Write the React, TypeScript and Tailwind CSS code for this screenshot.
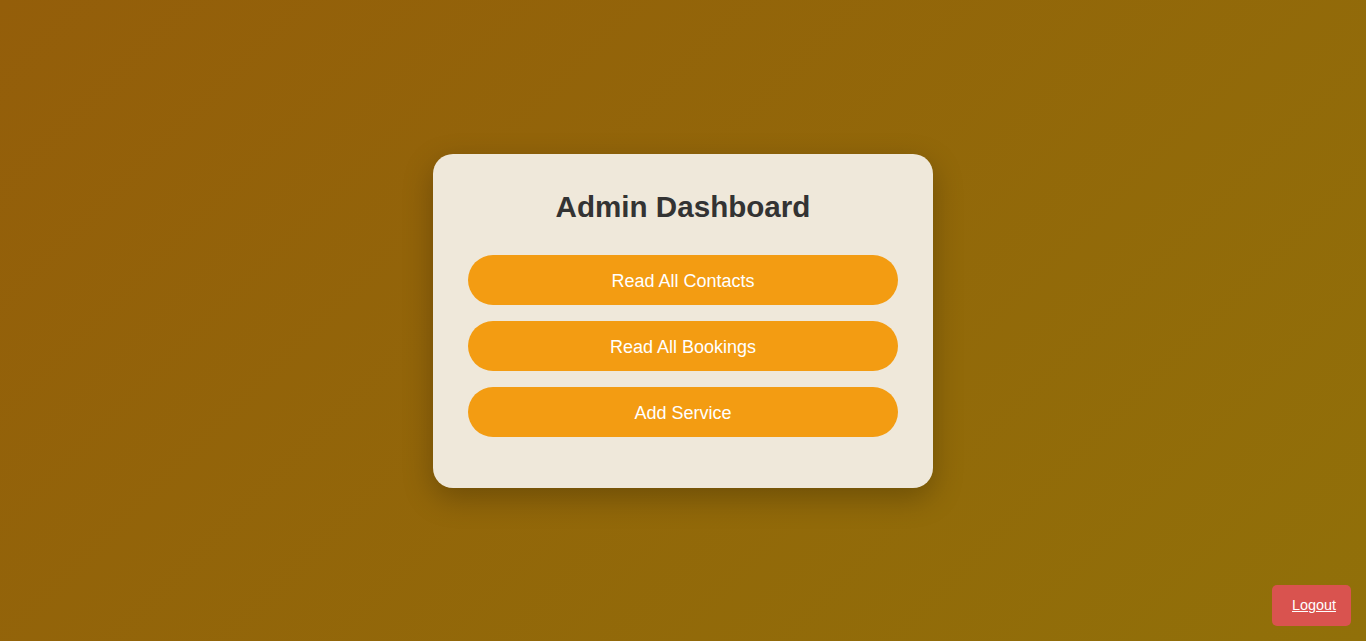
import React from "react";

export default function App() {
  return (
    <div
      className="relative w-full h-[641px] overflow-hidden flex items-center justify-center bg-[linear-gradient(135deg,#945e0a_0%,#917009_100%)]"
      style={{ fontFamily: '"Liberation Sans", Arial, sans-serif' }}
    >
      <div className="w-[500px] h-[334px] rounded-[20px] bg-[#efe8da] shadow-[0_10px_30px_rgba(0,0,0,0.25)] px-[35px] pt-[35px] flex flex-col">
        <h2 className="text-center text-[29.6px] font-bold text-[#333333] leading-[36px] mb-[30px]">
          Admin Dashboard
        </h2>
        <div className="flex flex-col gap-[16px]">
          {["Read All Contacts", "Read All Bookings", "Add Service"].map((t) => (
            <button
              key={t}
              className="h-[50px] w-full rounded-[25px] bg-[#f39c12] text-white text-[18px] pt-[3px] flex items-center justify-center"
            >
              {t}
            </button>
          ))}
        </div>
      </div>
      <a className="absolute right-[15px] bottom-[15px] w-[79px] h-[41px] rounded-[5px] bg-[#d9534f] text-white text-[14.4px] underline flex items-center justify-start pl-[20px]">
        Logout
      </a>
    </div>
  );
}
